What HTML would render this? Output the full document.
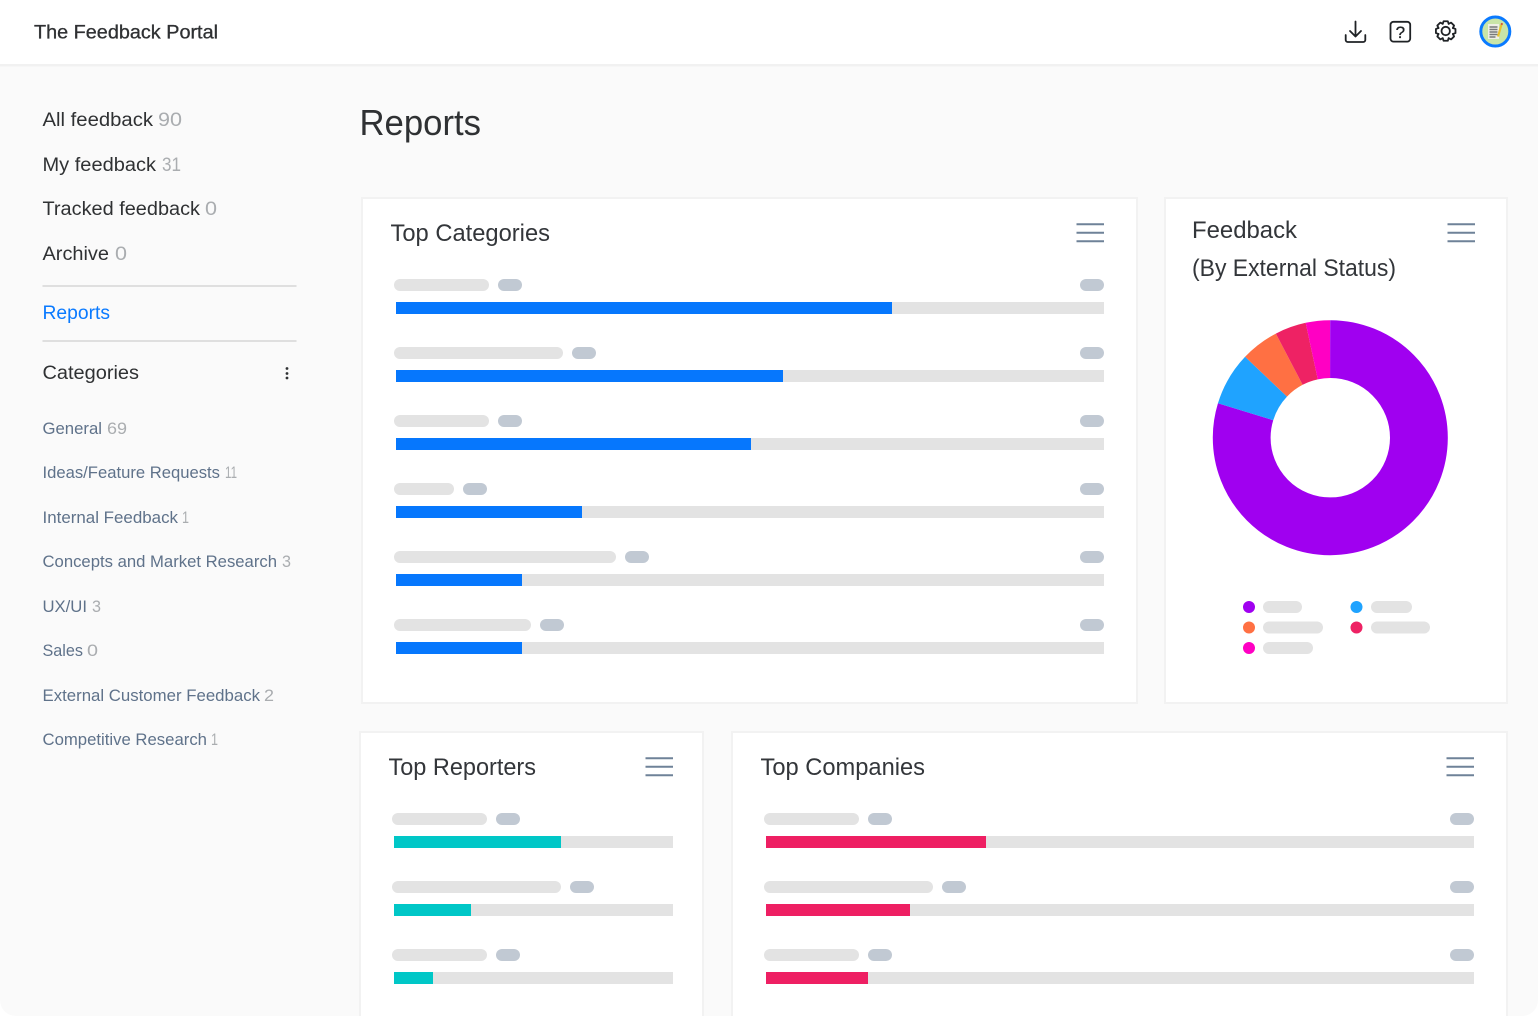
<!DOCTYPE html>
<html><head><meta charset="utf-8"><title>Reports</title>
<style>
html,body{margin:0;padding:0;background:#fff;width:1538px;height:1016px;overflow:hidden}
svg{display:block}
text{font-family:"Liberation Sans",sans-serif}
.a{font-size:19px;fill:#2f3133}
.g{font-size:19px;fill:#aaadb0}
.c{font-size:17px;fill:#5f728a}
.d{font-size:17px;fill:#aaadb0}
.t{font-size:24px;fill:#33363a}
.p{fill:#e3e3e3}
.s{fill:#c1c9d3}
.card{fill:#fff;stroke:#f2f2f2;stroke-width:2}
.m{stroke:#6f8298;stroke-width:2;fill:none}
.i{stroke:#1f2225;stroke-width:1.8;fill:none;stroke-linecap:round;stroke-linejoin:round}
</style></head>
<body>
<svg width="1538" height="1016" viewBox="0 0 1538 1016" xmlns="http://www.w3.org/2000/svg">
<rect width="1538" height="1016" fill="#fff"/>
<rect x="0" y="40" width="1538" height="976" rx="16" fill="#fafafa"/>
<rect width="1538" height="64" fill="#fff"/>
<rect y="64" width="1538" height="2" fill="#f1f1f1"/>
<rect y="66" width="1538" height="1" fill="#f6f6f6"/>

<text x="34" y="38.500" class="a" textLength="184" lengthAdjust="spacingAndGlyphs" stroke="#2f3133" stroke-width=".3">The Feedback Portal</text>

<!-- header icons -->
<path class="i" d="M1355.500 21.500V36.500M1350 31l5.500 5.500 5.500-5.500M1345.700 35v5a2 2 0 0 0 2 2h15.600a2 2 0 0 0 2-2V35"/>
<rect class="i" x="1390.500" y="21.800" width="19.700" height="19.800" rx="3"/>
<text x="1400.400" y="38" font-size="17" text-anchor="middle" fill="#1f2225" stroke="#1f2225" stroke-width=".3">?</text>
<g class="i" transform="translate(1445.700 31)">
<path d="M-2.980-7.200L-2.080-9.780H2.080L2.980-7.200"/>
<path transform="rotate(45)" d="M-2.980-7.200L-2.080-9.780H2.080L2.980-7.200"/>
<path transform="rotate(90)" d="M-2.980-7.200L-2.080-9.780H2.080L2.980-7.200"/>
<path transform="rotate(135)" d="M-2.980-7.200L-2.080-9.780H2.080L2.980-7.200"/>
<path transform="rotate(180)" d="M-2.980-7.200L-2.080-9.780H2.080L2.980-7.200"/>
<path transform="rotate(225)" d="M-2.980-7.200L-2.080-9.780H2.080L2.980-7.200"/>
<path transform="rotate(270)" d="M-2.980-7.200L-2.080-9.780H2.080L2.980-7.200"/>
<path transform="rotate(315)" d="M-2.980-7.200L-2.080-9.780H2.080L2.980-7.200"/>
<circle r="4.200"/>
</g>

<!-- avatar -->
<circle cx="1495.300" cy="31.500" r="14.500" fill="#c9e5a8" stroke="#0a7aff" stroke-width="3"/>
<rect x="1488" y="24" width="11" height="15" fill="#efefe6"/>
<path d="M1489.500 27h8M1489.500 29.500h8M1489.500 32h8M1489.500 34.500h8M1489.500 37h6" stroke="#77797a" stroke-width="1.400"/>
<path d="M1501.500 24.500l-3.500 12" stroke="#e9c22e" stroke-width="2.200"/>
<circle cx="1501.800" cy="24" r="1.100" fill="#d65a3a"/>

<!-- sidebar -->
<text x="42.500" y="126" class="a" textLength="110.500" lengthAdjust="spacingAndGlyphs">All feedback</text>
<text x="158" y="126" class="g" textLength="24" lengthAdjust="spacingAndGlyphs">90</text>
<text x="42.500" y="171" class="a" textLength="113.500" lengthAdjust="spacingAndGlyphs">My feedback</text>
<text x="162" y="171" class="g" textLength="19" lengthAdjust="spacingAndGlyphs">31</text>
<text x="42.500" y="215" class="a" textLength="157.500" lengthAdjust="spacingAndGlyphs">Tracked feedback</text>
<text x="205" y="215" class="g" textLength="12" lengthAdjust="spacingAndGlyphs">0</text>
<text x="42.500" y="260" class="a" textLength="66.500" lengthAdjust="spacingAndGlyphs">Archive</text>
<text x="115" y="260" class="g" textLength="12" lengthAdjust="spacingAndGlyphs">0</text>
<rect x="42.500" y="285" width="254" height="2" fill="#dfdfdf"/>
<text x="42.500" y="319" class="a" style="fill:#0a7aff" textLength="67.500" lengthAdjust="spacingAndGlyphs">Reports</text>
<rect x="42.500" y="340" width="254" height="2" fill="#dfdfdf"/>
<text x="42.500" y="379" class="a" textLength="96.500" lengthAdjust="spacingAndGlyphs">Categories</text>
<circle cx="287" cy="368.500" r="1.400" fill="#2f3133"/><circle cx="287" cy="373.500" r="1.400" fill="#2f3133"/><circle cx="287" cy="378" r="1.400" fill="#2f3133"/>

<text x="42.500" y="434" class="c" textLength="59.500" lengthAdjust="spacingAndGlyphs">General</text>
<text x="107" y="434" class="d" textLength="20" lengthAdjust="spacingAndGlyphs">69</text>
<text x="42.500" y="478" class="c" textLength="177.500" lengthAdjust="spacingAndGlyphs">Ideas/Feature Requests</text>
<text x="225" y="478" class="d" textLength="12" lengthAdjust="spacingAndGlyphs">11</text>
<text x="42.500" y="523" class="c" textLength="135.500" lengthAdjust="spacingAndGlyphs">Internal Feedback</text>
<text x="182" y="523" class="d" textLength="7" lengthAdjust="spacingAndGlyphs">1</text>
<text x="42.500" y="567" class="c" textLength="234.500" lengthAdjust="spacingAndGlyphs">Concepts and Market Research</text>
<text x="282" y="567" class="d" textLength="9" lengthAdjust="spacingAndGlyphs">3</text>
<text x="42.500" y="612" class="c" textLength="44.500" lengthAdjust="spacingAndGlyphs">UX/UI</text>
<text x="92" y="612" class="d" textLength="9" lengthAdjust="spacingAndGlyphs">3</text>
<text x="42.500" y="656" class="c" textLength="40.500" lengthAdjust="spacingAndGlyphs">Sales</text>
<text x="87" y="656" class="d" textLength="11" lengthAdjust="spacingAndGlyphs">0</text>
<text x="42.500" y="701" class="c" textLength="217.500" lengthAdjust="spacingAndGlyphs">External Customer Feedback</text>
<text x="264" y="701" class="d" textLength="10" lengthAdjust="spacingAndGlyphs">2</text>
<text x="42.500" y="745" class="c" textLength="164.500" lengthAdjust="spacingAndGlyphs">Competitive Research</text>
<text x="211" y="745" class="d" textLength="7" lengthAdjust="spacingAndGlyphs">1</text>

<text x="359.500" y="135" font-size="36" fill="#2f3133" textLength="121.500" lengthAdjust="spacingAndGlyphs">Reports</text>

<!-- cards -->
<rect class="card" x="362" y="198" width="775" height="505"/>
<rect class="card" x="1165" y="198" width="342" height="505"/>
<rect class="card" x="360" y="732" width="343" height="300"/>
<rect class="card" x="732" y="732" width="775" height="300"/>

<text x="390.500" y="241" class="t" textLength="159.500" lengthAdjust="spacingAndGlyphs">Top Categories</text>
<text x="1192" y="238" class="t" textLength="105" lengthAdjust="spacingAndGlyphs">Feedback</text>
<text x="1192" y="276" class="t" textLength="204" lengthAdjust="spacingAndGlyphs">(By External Status)</text>
<text x="388.500" y="775" class="t" textLength="147.500" lengthAdjust="spacingAndGlyphs">Top Reporters</text>
<text x="760.500" y="775" class="t" textLength="164.500" lengthAdjust="spacingAndGlyphs">Top Companies</text>

<path class="m" d="M1076.500 224.200h27.500M1076.500 232.700h27.500M1076.500 241.200h27.500"/>
<path class="m" d="M1447.500 224.200h27.500M1447.500 232.700h27.500M1447.500 241.200h27.500"/>
<path class="m" d="M645.500 758.200h27.500M645.500 766.700h27.500M645.500 775.200h27.500"/>
<path class="m" d="M1446.500 758.200h27.500M1446.500 766.700h27.500M1446.500 775.200h27.500"/>

<!-- Top Categories rows -->
<g>
<rect class="p" x="394" y="279" width="95" height="12" rx="6"/><rect class="s" x="498" y="279" width="24" height="12" rx="6"/><rect class="s" x="1080" y="279" width="24" height="12" rx="6"/>
<rect class="p" x="396" y="302" width="708" height="12"/><rect x="396" y="302" width="496" height="12" fill="#0677fd"/>
<rect class="p" x="394" y="347" width="169" height="12" rx="6"/><rect class="s" x="572" y="347" width="24" height="12" rx="6"/><rect class="s" x="1080" y="347" width="24" height="12" rx="6"/>
<rect class="p" x="396" y="370" width="708" height="12"/><rect x="396" y="370" width="387" height="12" fill="#0677fd"/>
<rect class="p" x="394" y="415" width="95" height="12" rx="6"/><rect class="s" x="498" y="415" width="24" height="12" rx="6"/><rect class="s" x="1080" y="415" width="24" height="12" rx="6"/>
<rect class="p" x="396" y="438" width="708" height="12"/><rect x="396" y="438" width="355" height="12" fill="#0677fd"/>
<rect class="p" x="394" y="483" width="60" height="12" rx="6"/><rect class="s" x="463" y="483" width="24" height="12" rx="6"/><rect class="s" x="1080" y="483" width="24" height="12" rx="6"/>
<rect class="p" x="396" y="506" width="708" height="12"/><rect x="396" y="506" width="186" height="12" fill="#0677fd"/>
<rect class="p" x="394" y="551" width="222" height="12" rx="6"/><rect class="s" x="625" y="551" width="24" height="12" rx="6"/><rect class="s" x="1080" y="551" width="24" height="12" rx="6"/>
<rect class="p" x="396" y="574" width="708" height="12"/><rect x="396" y="574" width="126" height="12" fill="#0677fd"/>
<rect class="p" x="394" y="619" width="137" height="12" rx="6"/><rect class="s" x="540" y="619" width="24" height="12" rx="6"/><rect class="s" x="1080" y="619" width="24" height="12" rx="6"/>
<rect class="p" x="396" y="642" width="708" height="12"/><rect x="396" y="642" width="126" height="12" fill="#0677fd"/>
</g>

<!-- Donut -->
<g fill="none" stroke-width="57.800" transform="rotate(-89.700 1330.300 437.700)">
<circle cx="1330.300" cy="437.700" r="88.600" pathLength="360" stroke="#a000f0" stroke-dasharray="287.100 72.900"/>
<circle cx="1330.300" cy="437.700" r="88.600" pathLength="360" stroke="#1fa3ff" stroke-dasharray="26.500 333.500" stroke-dashoffset="-287.100"/>
<circle cx="1330.300" cy="437.700" r="88.600" pathLength="360" stroke="#ff7043" stroke-dasharray="18.900 341.100" stroke-dashoffset="-313.600"/>
<circle cx="1330.300" cy="437.700" r="88.600" pathLength="360" stroke="#ee2264" stroke-dasharray="15.500 344.500" stroke-dashoffset="-332.500"/>
<circle cx="1330.300" cy="437.700" r="88.600" pathLength="360" stroke="#ff00c3" stroke-dasharray="12 348" stroke-dashoffset="-348"/>
</g>

<!-- Legend -->
<circle cx="1249" cy="607" r="6" fill="#a000f0"/><rect class="p" x="1263" y="601" width="39" height="12" rx="6"/>
<circle cx="1356.500" cy="607" r="6" fill="#1fa3ff"/><rect class="p" x="1371" y="601" width="41" height="12" rx="6"/>
<circle cx="1249" cy="627.500" r="6" fill="#ff7043"/><rect class="p" x="1263" y="621.500" width="60" height="12" rx="6"/>
<circle cx="1356.500" cy="627.500" r="6" fill="#ee2264"/><rect class="p" x="1371" y="621.500" width="59" height="12" rx="6"/>
<circle cx="1249" cy="648" r="6" fill="#ff00c3"/><rect class="p" x="1263" y="642" width="50" height="12" rx="6"/>

<!-- Top Reporters -->
<rect class="p" x="392" y="813" width="95" height="12" rx="6"/><rect class="s" x="496" y="813" width="24" height="12" rx="6"/>
<rect class="p" x="394" y="836" width="279" height="12"/><rect x="394" y="836" width="167" height="12" fill="#00c7c7"/>
<rect class="p" x="392" y="881" width="169" height="12" rx="6"/><rect class="s" x="570" y="881" width="24" height="12" rx="6"/>
<rect class="p" x="394" y="904" width="279" height="12"/><rect x="394" y="904" width="77" height="12" fill="#00c7c7"/>
<rect class="p" x="392" y="949" width="95" height="12" rx="6"/><rect class="s" x="496" y="949" width="24" height="12" rx="6"/>
<rect class="p" x="394" y="972" width="279" height="12"/><rect x="394" y="972" width="39" height="12" fill="#00c7c7"/>

<!-- Top Companies -->
<rect class="p" x="764" y="813" width="95" height="12" rx="6"/><rect class="s" x="868" y="813" width="24" height="12" rx="6"/><rect class="s" x="1450" y="813" width="24" height="12" rx="6"/>
<rect class="p" x="766" y="836" width="708" height="12"/><rect x="766" y="836" width="220" height="12" fill="#ee1f63"/>
<rect class="p" x="764" y="881" width="169" height="12" rx="6"/><rect class="s" x="942" y="881" width="24" height="12" rx="6"/><rect class="s" x="1450" y="881" width="24" height="12" rx="6"/>
<rect class="p" x="766" y="904" width="708" height="12"/><rect x="766" y="904" width="144" height="12" fill="#ee1f63"/>
<rect class="p" x="764" y="949" width="95" height="12" rx="6"/><rect class="s" x="868" y="949" width="24" height="12" rx="6"/><rect class="s" x="1450" y="949" width="24" height="12" rx="6"/>
<rect class="p" x="766" y="972" width="708" height="12"/><rect x="766" y="972" width="102" height="12" fill="#ee1f63"/>
</svg>
</body></html>
